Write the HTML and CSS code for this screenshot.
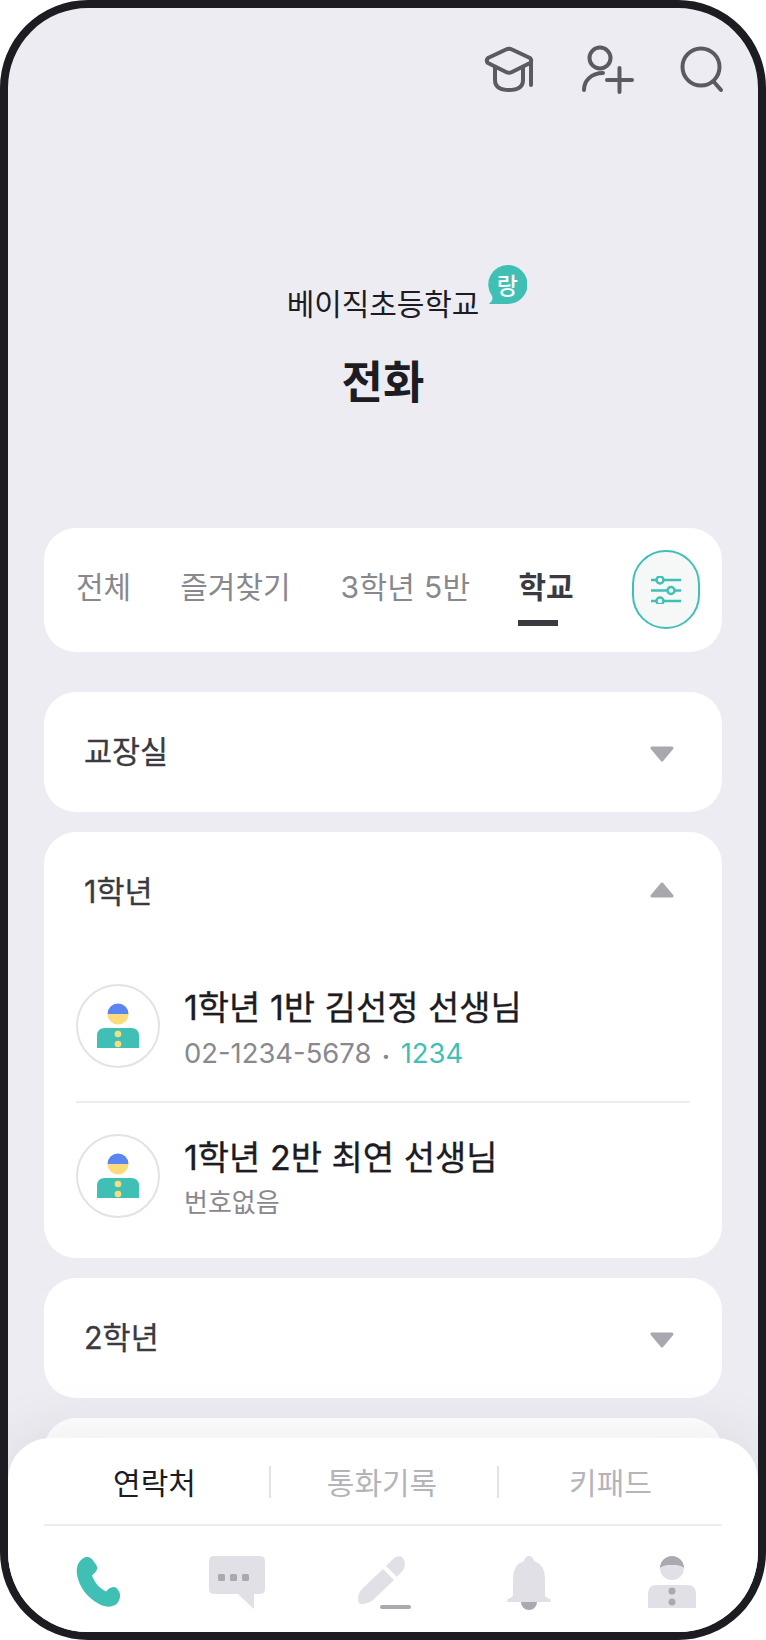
FILE: index.html
```html
<!DOCTYPE html>
<html lang="ko">
<head>
<meta charset="utf-8">
<title>전화</title>
<link rel="stylesheet" href="styles.css">
</head>
<body>
<div class="phone">
  <header class="topbar">
    <svg class="ic ic-cap" viewBox="0 0 52 48" width="52" height="48"><path d="M22 3.500 L4 12 Q1.500 14.500 4 17 L22 26 Q25 27.500 28 26 L46 17 Q48.500 14.500 46 12 L28 3.500 Q25 2 22 3.500Z M11 21 V34 Q11 44 25 44 Q39 44 39 34 V21 M47 15 V39"/></svg>
    <svg class="ic ic-add" viewBox="0 0 54 52" width="54" height="52"><circle cx="20" cy="15" r="10.500"/><path d="M4 47 C4 38 11 30 23 30 M27 37 H52 M39.500 25 V49"/></svg>
    <svg class="ic ic-search" viewBox="0 0 44 48" width="44" height="48"><circle cx="21" cy="22" r="18.500"/><path d="M34 37 L41 45"/></svg>
  </header>

  <div class="heading">
    <div class="school"><span class="school-name">베이직초등학교<span class="badge"><svg class="badge-bg" viewBox="0 0 40 40" width="40" height="40"><path d="M21 0 A19.500 19.500 0 0 1 21 39 H2 Q7 35 5 31 A19.500 19.500 0 0 1 21 0Z"/></svg><span class="badge-text">랑</span></span></span></div>
    <h1 class="title">전화</h1>
  </div>

  <main class="content">
    <nav class="card tabs">
      <span class="tab tab-a">전체</span>
      <span class="tab tab-b">즐겨찾기</span>
      <span class="tab tab-c">3학년 5반</span>
      <span class="tab tab-d active">학교</span>
      <button class="filter" type="button">
        <svg viewBox="0 0 32 28" width="32" height="28"><path d="M1 4 H31 M1 14.500 H31 M1 25 H31"/><circle cx="10" cy="4" r="3.500"/><circle cx="21" cy="14.500" r="3.500"/><circle cx="10" cy="25" r="3.500"/></svg>
      </button>
    </nav>

    <section class="card group">
      <div class="group-head"><span>교장실</span><svg class="tri" viewBox="0 0 24 16" width="24" height="16"><path d="M2 2 H22 L12 14Z"/></svg></div>
    </section>

    <section class="card group open">
      <div class="group-head"><span>1학년</span><svg class="tri up" viewBox="0 0 24 16" width="24" height="16"><path d="M2 2 H22 L12 14Z"/></svg></div>
      <div class="contact first">
        <div class="avatar"><svg viewBox="0 0 44 46" width="44" height="46"><path class="a-blue" d="M11.500 11 A10.500 10.500 0 0 1 32.500 11Z"/><path class="a-yellow" d="M11.500 11 A10.500 10.500 0 0 0 32.500 11Z"/><path class="a-teal" d="M1 45 V33 Q1 25 9 25 H35 Q43 25 43 33 V45Z"/><circle class="a-yellow" cx="22" cy="31" r="3.300"/><circle class="a-yellow" cx="22" cy="41" r="3.300"/></svg></div>
        <div class="info">
          <div class="name">1학년 1반 김선정 선생님</div>
          <div class="sub">02-1234-5678 <span class="dot">•</span> <span class="ext">1234</span></div>
        </div>
      </div>
      <div class="contact second">
        <div class="avatar"><svg viewBox="0 0 44 46" width="44" height="46"><path class="a-blue" d="M11.500 11 A10.500 10.500 0 0 1 32.500 11Z"/><path class="a-yellow" d="M11.500 11 A10.500 10.500 0 0 0 32.500 11Z"/><path class="a-teal" d="M1 45 V33 Q1 25 9 25 H35 Q43 25 43 33 V45Z"/><circle class="a-yellow" cx="22" cy="31" r="3.300"/><circle class="a-yellow" cx="22" cy="41" r="3.300"/></svg></div>
        <div class="info">
          <div class="name">1학년 2반 최연 선생님</div>
          <div class="sub sub-kr">번호없음</div>
        </div>
      </div>
    </section>

    <section class="card group">
      <div class="group-head"><span>2학년</span><svg class="tri" viewBox="0 0 24 16" width="24" height="16"><path d="M2 2 H22 L12 14Z"/></svg></div>
    </section>

    <section class="card group"></section>
  </main>

  <footer class="sheet">
    <div class="sheet-tabs">
      <span class="stab current">연락처</span>
      <span class="stab">통화기록</span>
      <span class="stab">키패드</span>
    </div>
    <div class="nav">
      <svg class="nav-phone" viewBox="0 0 46 52" width="46" height="52"><path d="M8 2.500 C12 -.5 16 1.500 18 4.500 L21 8.500 C23 11.500 22 14.500 20 16.500 L17 19.500 C20 27.500 25 32.500 31 35.500 L34 32.500 C37 30.500 40 30.500 42 32.500 L44 35.500 C46 38.500 45 44.500 42 47.500 C38 51.500 31 51.500 25 48.500 C13 42.500 4 31.500 2 18.500 C1 11.500 3 5.500 8 2.500Z"/></svg>
      <svg class="nav-chat" viewBox="0 0 56 54" width="56" height="54"><path class="g1" d="M5 0 H51 Q56 0 56 5 V33 Q56 38 51 38 H45 V53 L29 38 H5 Q0 38 0 33 V5 Q0 0 5 0Z"/><rect class="g2" x="9" y="18" width="7" height="7" rx="1.500"/><rect class="g2" x="21" y="18" width="7" height="7" rx="1.500"/><rect class="g2" x="33" y="18" width="7" height="7" rx="1.500"/></svg>
      <svg class="nav-pen" viewBox="0 0 53 54" width="53" height="54"><path class="g1" d="M25 13 L36 24 L14 45 Q8 48 4 48 Q0 48 0 44 Q0 37 4 33Z"/><path class="g1" d="M28 10 L36 2 Q40 -1 44 1 Q47 4 47 8 Q47 11 45 14 L39 21Z"/><rect class="g2" x="22" y="49" width="31" height="4" rx="2"/></svg>
      <svg class="nav-bell" viewBox="0 0 46 56" width="46" height="56"><path class="g2" d="M15 46 H31 A8 8 0 0 1 15 46Z"/><path class="g1" d="M23 0 Q27 0 28 5 Q39 9 39 22 V39 Q39 41 42 42 Q45 43 45 44.500 Q45 46 43 46 H3 Q1 46 1 44.500 Q1 43 4 42 Q7 41 7 39 V22 Q7 9 18 5 Q19 0 23 0Z"/></svg>
      <svg class="nav-user" viewBox="0 0 48 54" width="48" height="54"><path class="g2" d="M12 12 A12 12 0 0 1 36 12 Q32 9 24 9 Q16 9 12 12Z"/><path class="g1" d="M12 12 Q16 9 24 9 Q32 9 36 12 A12 12 0 0 1 12 12Z"/><path class="g1" d="M0 52 V38 Q0 29 9 29 H39 Q48 29 48 38 V52Z"/><circle class="g2" cx="24" cy="35" r="3.500"/><circle class="g2" cx="24" cy="46" r="3.500"/></svg>
    </div>
  </footer>
</div>
</body>
</html>
```

FILE: styles.css
```css
* { box-sizing: border-box; }
html, body { margin: 0; padding: 0; background: #fff; }
body {
  font-family: Inter, "Noto Sans CJK KR", sans-serif;
  color: #1c1c22;
}
.phone {
  position: relative;
  width: 766px;
  height: 1640px;
  border: 8px solid #1c1c22;
  border-radius: 88px;
  background: #edecf2;
  overflow: hidden;
}
.topbar {
  display: flex;
  justify-content: flex-end;
  align-items: flex-start;
  height: 120px;
  padding: 36px 34px 0 0;
}
.ic { fill: none; stroke: #5a5a60; stroke-width: 4; stroke-linecap: round; stroke-linejoin: round; display: block; }
.ic-cap { margin-right: 44px; margin-top: 2px; }
.ic-add { margin-right: 46px; margin-top: -1px; }
.ic-search { margin-top: 1px; }

.heading { text-align: center; padding-top: 140px; height: 400px; }
.school { font-size: 30px; line-height: 44px; letter-spacing: -.1px; margin-top: 14px; }
.school-name { position: relative; display: inline-block; }
.badge { position: absolute; left: 200px; top: -17px; width: 40px; height: 40px; }
.badge-bg { position: absolute; inset: 0; fill: #40c0b5; }
.badge-text { position: absolute; inset: 0; padding-left: 1px; color: #fff; font-size: 23px; font-weight: 500; line-height: 42px; text-align: center; }
.title { margin: 27px 0 0; font-size: 45px; font-weight: 700; line-height: 60px; }

.content { display: flex; flex-direction: column; gap: 20px; padding: 0 36px; }
.card { background: #fff; border-radius: 32px; }

.tabs {
  position: relative;
  display: flex;
  align-items: flex-start;
  height: 124px;
  margin-bottom: 20px;
  padding: 0 22px 0 32px;
}
.tab {
  display: block;
  height: 98px;
  padding-top: 37px;
  font-size: 30px;
  line-height: 44px;
  color: #88888e;
  white-space: nowrap;
}
.tab-b { margin-left: 49px; }
.tab-c { margin-left: 50px; letter-spacing: .3px; }
.tab-d { margin-left: 48px; position: relative; }
.tab.active { color: #3a3a40; font-weight: 700; }
.tab.active::after {
  content: "";
  position: absolute;
  left: 0;
  top: 92px;
  width: 40px;
  height: 6px;
  background: #3a3a40;
}
.filter {
  margin-left: auto;
  margin-top: 22px;
  width: 68px;
  height: 79px;
  padding: 0;
  border: 2px solid #40c0b5;
  border-radius: 34px;
  background: #f6f8f8;
  display: flex;
  align-items: center;
  justify-content: center;
}
.filter svg { fill: #f6f8f8; stroke: #40c0b5; stroke-width: 2.500; }

.group { min-height: 120px; flex: none; }
.group-head {
  display: flex;
  align-items: center;
  justify-content: space-between;
  height: 120px;
  padding: 0 48px 0 40px;
  font-size: 30.500px;
  color: #3a3a40;
  font-weight: 400;
  -webkit-text-stroke: .3px #3a3a40;
}
.group-head span { margin-bottom: 4px; }
.tri { display: block; margin-top: 4px; fill: #a8a8ae; stroke: #a8a8ae; stroke-width: 3; stroke-linejoin: round; }
.tri.up { margin-top: 0; margin-bottom: 4px; transform: rotate(180deg); }
.open { padding-bottom: 39px; }
.contact { display: flex; align-items: center; gap: 24px; margin: 0 32px; }
.contact.first { margin-top: 31px; }
.contact.second { border-top: 2px solid #edecf2; margin-top: 32px; padding-top: 30px; }
.avatar {
  width: 84px;
  height: 84px;
  flex: none;
  border: 2px solid #e2e2e8;
  border-radius: 50%;
  display: flex;
  align-items: center;
  justify-content: center;
}
.avatar svg { display: block; }
.a-blue { fill: #5b86f0; }
.a-yellow { fill: #fbdc7c; }
.a-teal { fill: #40c0b5; }
.info { height: 86px; margin: 2px 0 -2px; }
.name { height: 46px; font-size: 34px; font-weight: 400; line-height: 46px; color: #1c1c22; white-space: nowrap; -webkit-text-stroke: .35px #1c1c22; }
.sub { height: 36px; font-size: 27.400px; line-height: 36px; color: #88888e; margin-top: 4px; white-space: nowrap; }
.sub-kr { font-size: 26px; }
.dot { font-size: 14px; vertical-align: 2px; margin: 0 3px; }
.ext { color: #40c0b5; }

.sheet {
  position: absolute;
  left: 0;
  right: 0;
  bottom: 0;
  height: 194px;
  padding: 0 36px;
  background: #fff;
  border-radius: 42px 42px 0 0;
  box-shadow: 0 -4px 60px rgba(40, 40, 50, .09);
}
.sheet-tabs {
  display: grid;
  grid-template-columns: 225px 228px 225px;
  height: 88px;
  padding-top: 28px;
  border-bottom: 2px solid #edecf2;
}
.stab {
  height: 32px;
  display: flex;
  align-items: center;
  justify-content: center;
  padding-bottom: 2px;
  font-size: 30px;
  color: #b4b4ba;
}
.stab:not(:last-child) { padding-right: 4px; }
.stab + .stab { border-left: 2px solid #e2e2e8; }
.stab.current { color: #1c1c22; font-weight: 400; }

.nav {
  display: flex;
  align-items: flex-start;
  padding: 30px 0 0 31px;
}
.nav svg { display: block; flex: none; }
.nav-chat { margin-left: 88px; }
.nav-pen { margin-left: 93px; }
.nav-bell { margin-left: 95px; }
.nav-user { margin-left: 96px; }
.nav-phone { fill: #40c0b5; }
.g1 { fill: #e0e0e6; }
.g2 { fill: #a9a9af; }
```
